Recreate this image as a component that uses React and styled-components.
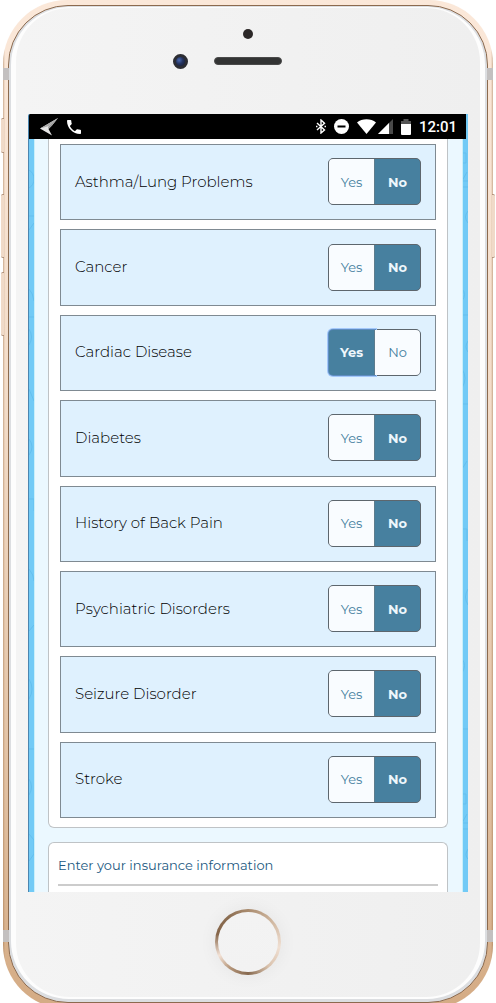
import React, { useState } from 'react';
import styled, { createGlobalStyle, css } from 'styled-components';

const GlobalStyle = createGlobalStyle`
  *, *::before, *::after { box-sizing: border-box; }
  body {
    margin: 0;
    background: #fff;
    font-family: Montserrat, Inter, "Liberation Sans", sans-serif;
    color: #000;
    overflow: hidden;
  }
`;

/* ---------- phone shell ---------- */

const Phone = styled.main`
  position: relative;
  margin: 0 3px;
  padding: 5px 5px 6px;
  border-radius: 64px;
  background:
    linear-gradient(90deg, rgba(150, 105, 65, 0.45), transparent 2px, transparent calc(100% - 2px), rgba(150, 105, 65, 0.45)),
    linear-gradient(180deg, #fbe8d9 0, #f3dcc8 40%, #e3c3a5 75%, #d4ab84 100%);
`;

const Rim = styled.div`
  border: 1px solid #8c6a4e;
  border-radius: 60px;
  padding: 1px 2px 3px;
  background: #dcdee1;
`;

const Glass = styled.div`
  border-radius: 58px;
  padding: 1px 5px 2px;
  background: #fdfdfd;
`;

const Face = styled.div`
  border-radius: 54px;
  padding: 0 12px;
  background: linear-gradient(90deg, #f4f4f4, #efefef);
`;

const SideKey = styled.span`
  position: absolute;
  top: ${(p) => p.$top}px;
  ${(p) => (p.$right ? 'right' : 'left')}: -2px;
  width: 3px;
  height: ${(p) => p.$height}px;
  border: 1px solid #b0917a;
  border-width: 1px 0;
  border-radius: ${(p) => (p.$right ? '0 2px 2px 0' : '2px 0 0 2px')};
  background: #f0dac8;
`;

const Antenna = styled.span`
  position: absolute;
  ${(p) => (p.$bottom ? 'bottom: 67px' : 'top: 68px')};
  ${(p) => (p.$right ? 'right' : 'left')}: 0;
  width: 6px;
  height: 12px;
  background: #c3c0c0;
`;

const TopBezel = styled.div`
  display: grid;
  grid-template-columns: 1fr 68px 1fr;
  grid-template-rows: 10px 14px;
  row-gap: 15px;
  align-items: center;
  justify-items: center;
  height: 106px;
  padding-top: 21px;
  align-content: start;
`;

const Sensor = styled.span`
  grid-column: 2;
  width: 10px;
  height: 10px;
  border-radius: 50%;
  background: #2b2727;
`;

const Camera = styled.span`
  grid-column: 1;
  justify-self: end;
  margin-right: 26px;
  width: 15px;
  height: 15px;
  border-radius: 50%;
  border: 3px solid #2c2d33;
  background: radial-gradient(circle at 35% 35%, #4a69b0 0, #24335f 45%, #171b2c 100%);
`;

const Speaker = styled.span`
  grid-column: 2;
  width: 68px;
  height: 8px;
  border-radius: 4px;
  background: #333434;
  border: 1px solid #4a4a4a;
`;

const BottomBezel = styled.div`
  display: flex;
  justify-content: center;
  padding: 17px 0 22px;
`;

const HomeButton = styled.button`
  width: 66px;
  height: 66px;
  padding: 0;
  border: 3px solid transparent;
  border-radius: 50%;
  background:
    linear-gradient(#f3f3f3, #f2f2f2) padding-box,
    conic-gradient(#a98b6e, #cdb49c 45deg, #f0dfd2 100deg, #d9c2ad 140deg, #86694f 180deg, #b5967a 215deg, #f3e2d6 245deg, #86664a 285deg, #8a6c50 320deg, #a98b6e) border-box;
  box-shadow: 0 0 16px 3px rgba(0, 0, 0, 0.04);
`;

/* ---------- screen ---------- */

const Screen = styled.div`
  position: relative;
  overflow: hidden;
  border-left: 1px solid #4b86b0;
  border-radius: 2px 0 0 0;
  background: #72caf6;
`;

const StatusBar = styled.header`
  position: relative;
  display: flex;
  align-items: center;
  height: 25px;
  margin-right: 2px;
  padding: 0 9px 0 10px;
  background: #000;
  color: #fff;
`;

const StatusGroup = styled.div`
  display: flex;
  align-items: center;
  gap: ${(p) => p.$gap}px;
  margin-left: ${(p) => (p.$end ? 'auto' : '0')};
`;

const Clock = styled.time`
  margin-left: 8px;
  padding-top: 2px;
  font: 500 15px/23px Roboto, sans-serif;
`;

const Doodles = styled.svg`
  position: absolute;
  top: 25px;
  ${(p) => (p.$right ? 'right' : 'left')}: 0;
  width: 6px;
  height: 753px;
  fill: none;
  stroke: #64bfee;
  stroke-width: 1;
`;

const Form = styled.form`
  position: relative;
  margin: 0 5px;
  padding: 0 14px 0 13px;
  border: 0 solid #c9effa;
  border-width: 0 1px;
  background: #ebf8ff;
`;

const Card = styled.section`
  border: 1px solid #bfc3c6;
  background: #fff;
  ${(p) =>
    p.$place === 'upper'
      ? css`
          border-top: 0;
          border-radius: 0 0 6px 6px;
          padding: 5px 11px 9px;
        `
      : css`
          margin-top: 14px;
          border-bottom: 0;
          border-radius: 6px 6px 0 0;
          padding: 11px 9px 6px;
        `}
`;

const ConditionList = styled.div`
  display: grid;
  grid-auto-rows: 1fr;
  gap: 9px;
  min-height: 674px;
`;

const ConditionRow = styled.fieldset`
  display: flex;
  align-items: center;
  justify-content: space-between;
  min-width: 0;
  margin: 0;
  padding: 0 14px 1px;
  border: 1px solid #7f8a92;
  background: #dff1fe;
`;

const ConditionName = styled.span`
  font-size: 15px;
  font-weight: 350;
  line-height: 20px;
`;

const Toggle = styled.div`
  display: flex;
  width: 93px;
  height: 47px;
  border: 1px solid #5d666d;
  border-radius: 5px;
  background: #5d666d;
`;

const HiddenRadio = styled.input`
  position: absolute;
  opacity: 0;
  width: 1px;
  height: 1px;
  margin: 0;
`;

const Choice = styled.label`
  flex: 1;
  display: flex;
  align-items: center;
  justify-content: center;
  font-size: 13px;
  line-height: 18px;
  color: ${(p) => (p.$on ? '#eef7fc' : '#447e9e')};
  background: ${(p) => (p.$on ? '#47809f' : '#f9fcff')};
  font-weight: ${(p) => (p.$on ? 700 : 400)};
  border-radius: ${(p) => (p.$side === 'left' ? '4px 0 0 4px' : '0 4px 4px 0')};
  border-right: ${(p) => (p.$side === 'left' ? '1px solid #5d7c8d' : '0')};
  box-shadow: ${(p) => (p.$focus ? '0 0 0 1px #5f8cc0, 0 0 0 2px #a3c8fa' : 'none')};
`;

const InsuranceTitle = styled.h2`
  margin: 0;
  padding-bottom: 8px;
  border-bottom: 2px solid #ccc;
  font-size: 13px;
  font-weight: 400;
  line-height: 22px;
  color: #22597f;
`;

/* ---------- status icons ---------- */

const ArrowLogo = () => (
  <svg width="20" height="18" viewBox="0 0 20 18" aria-hidden="true">
    <path d="M1 10.500L19 0 13 7.500 9.500 11 13 17.500Z" fill="#e4e4e4" />
    <path d="M1 10.500L19 0 10 8Z" fill="#a9a9a9" />
    <path d="M19 0L13 7.500 9.500 11 9 9Z" fill="#9a9a9a" />
  </svg>
);

const PhoneIcon = () => (
  <svg width="14" height="14" viewBox="3 3 18 18" aria-hidden="true">
    <path
      fill="#fff"
      d="M6.620 10.790c1.440 2.830 3.760 5.140 6.590 6.590l2.200-2.200c.27-.27.67-.36 1.020-.24 1.120.37 2.330.57 3.570.57.55 0 1 .45 1 1V20c0 .55-.45 1-1 1-9.390 0-17-7.610-17-17 0-.55.45-1 1-1h3.500c.55 0 1 .45 1 1 0 1.250.2 2.450.57 3.570.11.35.03.74-.25 1.020l-2.200 2.200z"
    />
  </svg>
);

const BluetoothIcon = () => (
  <svg width="10" height="15" viewBox="0 0 10 15" fill="none" stroke="#fff" strokeWidth="1.400" aria-hidden="true">
    <path d="M1 4L8.500 11 5 14V1L8.500 4.200 1 11" />
    <path d="M0 7.500H1.500M8.500 7.500H10" />
  </svg>
);

const BlockedIcon = () => (
  <svg width="15" height="15" viewBox="0 0 15 15" aria-hidden="true">
    <circle cx="7.500" cy="7.500" r="7.500" fill="#fff" />
    <rect x="3.500" y="6.500" width="8" height="2" fill="#000" />
  </svg>
);

const WifiIcon = () => (
  <svg width="19" height="15" viewBox="0 0 19 15" aria-hidden="true">
    <path d="M0 3.500C5 -.7 14 -.7 19 3.500L9.500 15Z" fill="#fff" />
  </svg>
);

const SignalIcon = () => (
  <svg width="15" height="15" viewBox="0 0 15 15" aria-hidden="true">
    <path d="M15 0V15H0Z" fill="#4a4a4a" />
    <path d="M11 4V15H0Z" fill="#fff" />
  </svg>
);

const BatteryIcon = () => (
  <svg width="10" height="16" viewBox="0 0 10 16" aria-hidden="true">
    <path d="M0 2H2.500V0H7.500V2H10V5H0Z" fill="#555" />
    <path d="M0 5H10V15Q10 16 9 16H1Q0 16 0 15Z" fill="#fff" />
  </svg>
);

const CONDITIONS = [
  'Asthma/Lung Problems',
  'Cancer',
  'Cardiac Disease',
  'Diabetes',
  'History of Back Pain',
  'Psychiatric Disorders',
  'Seizure Disorder',
  'Stroke',
];

function Condition({ name, value, onChange }) {
  const id = name.replace(/\W+/g, '-').toLowerCase();
  return (
    <ConditionRow aria-labelledby={`${id}-name`}>
      <ConditionName id={`${id}-name`}>{name}</ConditionName>
      <Toggle>
        {['Yes', 'No'].map((option) => (
          <React.Fragment key={option}>
            <HiddenRadio
              type="radio"
              id={`${id}-${option}`}
              name={id}
              value={option}
              checked={value === option}
              onChange={() => onChange(option)}
            />
            <Choice
              htmlFor={`${id}-${option}`}
              $side={option === 'Yes' ? 'left' : 'right'}
              $on={value === option}
              $focus={option === 'Yes' && value === option}
            >
              {option}
            </Choice>
          </React.Fragment>
        ))}
      </Toggle>
    </ConditionRow>
  );
}

export default function App() {
  const [answers, setAnswers] = useState({ 'Cardiac Disease': 'Yes' });

  return (
    <>
      <GlobalStyle />
      <Phone>
        <SideKey $top={118} $height={35} />
        <SideKey $top={194} $height={64} />
        <SideKey $top={272} $height={64} />
        <SideKey $right $top={194} $height={64} />
        <Rim>
          <Glass>
            <Face>
              <TopBezel>
                <Sensor />
                <Camera />
                <Speaker />
              </TopBezel>
              <Screen>
                <StatusBar>
                  <StatusGroup $gap={8}>
                    <ArrowLogo />
                    <PhoneIcon />
                  </StatusGroup>
                  <StatusGroup $end $gap={8}>
                    <BluetoothIcon />
                    <BlockedIcon />
                    <StatusGroup $gap={2}>
                      <WifiIcon />
                      <SignalIcon />
                    </StatusGroup>
                    <BatteryIcon />
                  </StatusGroup>
                  <Clock>12:01</Clock>
                </StatusBar>
                <Doodles viewBox="0 0 6 753" aria-hidden="true">
                  <path d="M0 31Q5 34 5 40T0 49M0 77H5M0 91L5 84M0 150Q4 154 5 162M0 178H5M0 190Q5 198 0 206M0 250L5 262M0 300Q6 308 0 316M0 360H5V372M0 430Q5 436 5 442M0 492L5 486M0 540Q6 550 0 560M0 610H5M0 640Q5 648 0 656M0 695L5 701V715L0 722" />
                </Doodles>
                <Doodles $right viewBox="0 0 6 753" aria-hidden="true">
                  <path d="M0 14H4V24H0M0 42L5 33M0 42H6M0 48H6M6 72Q1 78 6 84M0 150Q5 155 0 162M0 176H6M6 202Q2 208 6 213M0 230Q6 239 0 249M0 265H6M0 330L5 322M0 390H5V402M6 450Q1 458 6 466M0 520Q5 526 0 534M0 590H6M0 655H4V665H0M0 684L5 675M0 684H6M0 690H6M6 710Q2 716 6 720" />
                </Doodles>
                <Form>
                  <Card $place="upper">
                    <ConditionList>
                      {CONDITIONS.map((name) => (
                        <Condition
                          key={name}
                          name={name}
                          value={answers[name] || 'No'}
                          onChange={(v) => setAnswers((a) => ({ ...a, [name]: v }))}
                        />
                      ))}
                    </ConditionList>
                  </Card>
                  <Card $place="lower">
                    <InsuranceTitle>Enter your insurance information</InsuranceTitle>
                  </Card>
                </Form>
              </Screen>
              <BottomBezel>
                <HomeButton type="button" aria-label="Home" />
              </BottomBezel>
            </Face>
          </Glass>
        </Rim>
        <Antenna />
        <Antenna $right />
        <Antenna $bottom />
        <Antenna $right $bottom />
      </Phone>
    </>
  );
}
